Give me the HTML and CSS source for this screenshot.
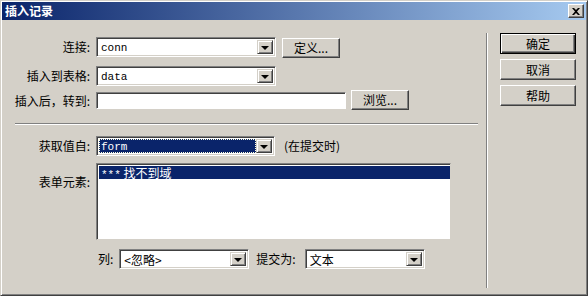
FILE: index.html
```html
<!DOCTYPE html>
<html>
<head>
  <title>插入记录</title>
  <link rel="stylesheet" href="styles.css">
</head>
<body>
  <div class="window">
    <div class="titlebar">
      <span class="title">插入记录</span>
      <span class="close">
        <svg width="8" height="7" viewBox="0 0 8 7"><path d="M0 0h2l2 2 2-2h2L5 3.5 8 7H6L4 5 2 7H0l3-3.5z" fill="#000"/></svg>
      </span>
    </div>
    <div class="body">
      <div class="main">
        <div class="row row-conn">
          <label class="lbl">连接:</label>
          <div class="select w180"><span class="value mono">conn</span><span class="arrow"></span></div>
          <button class="btn btn-small">定义...</button>
        </div>
        <div class="row row-table">
          <label class="lbl">插入到表格:</label>
          <div class="select w180"><span class="value mono">data</span><span class="arrow"></span></div>
        </div>
        <div class="row row-goto">
          <label class="lbl">插入后，转到:</label>
          <div class="textbox"></div>
          <button class="btn btn-small">浏览...</button>
        </div>

        <div class="hsep"></div>

        <div class="row row-from">
          <label class="lbl">获取值自:</label>
          <div class="select w179 focused"><span class="value mono">form</span><span class="arrow"></span></div>
          <span class="note">(在提交时)</span>
        </div>
        <div class="row row-elems">
          <label class="lbl lbl-top">表单元素:</label>
          <div class="listbox">
            <div class="item selected"><span class="mono">***</span> 找不到域</div>
          </div>
        </div>
        <div class="row row-col">
          <span class="small-lbl">列:</span>
          <div class="select w130"><span class="value">&lt;忽略&gt;</span><span class="arrow"></span></div>
          <span class="small-lbl submit-lbl">提交为:</span>
          <div class="select w120"><span class="value">文本</span><span class="arrow"></span></div>
        </div>
      </div>
      <div class="vsep"></div>
      <div class="side">
        <button class="btn btn-side default">确定</button>
        <button class="btn btn-side">取消</button>
        <button class="btn btn-side">帮助</button>
      </div>
    </div>
  </div>
</body>
</html>
```

FILE: styles.css
```css
body {
  margin: 0;
  font-family: "Noto Sans CJK SC", "DejaVu Sans", sans-serif;
  font-size: 12px;
  line-height: 14px;
  color: #000;
}

.window {
  width: 588px;
  height: 296px;
  box-sizing: border-box;
  background-color: #d4d0c8;
  border: 1px solid;
  border-color: #d4d0c8 #404040 #404040 #d4d0c8;
  box-shadow: inset 1px 1px #fff, inset -1px -1px #808080;
  padding: 1px;
  display: flex;
  flex-direction: column;
}

.titlebar {
  height: 18px;
  background: linear-gradient(to right, #0a246a, #a6caf0);
  display: flex;
  align-items: center;
  justify-content: space-between;
  padding: 0 2px 0 3px;
}

.title {
  color: #fff;
  font-weight: bold;
}

.close {
  width: 16px;
  height: 14px;
  box-sizing: border-box;
  background-color: #d4d0c8;
  border: 1px solid;
  border-color: #fff #404040 #404040 #fff;
  box-shadow: inset -1px -1px #808080;
  display: flex;
  align-items: center;
  justify-content: center;
}

.body {
  flex: 1;
  display: flex;
}

.main {
  width: 482px;
  padding-top: 16px;
}

.row {
  display: flex;
  align-items: center;
}

.lbl {
  width: 88px;
  text-align: right;
  margin-right: 6px;
  flex-shrink: 0;
}

.mono {
  font-family: "Liberation Mono", "Noto Sans CJK SC", monospace;
  font-size: 11px;
}

.select {
  height: 20px;
  box-sizing: border-box;
  background-color: #fff;
  border: 1px solid;
  border-color: #808080 #fff #fff #808080;
  box-shadow: inset 1px 1px #404040, inset -1px -1px #d4d0c8;
  padding: 2px;
  display: flex;
  align-items: stretch;
}

.w180 { width: 180px; }
.w179 { width: 179px; }
.w130 { width: 130px; }
.w120 { width: 120px; }

.value {
  flex: 1;
  padding-left: 2px;
  line-height: 16px;
  white-space: nowrap;
}

.select.focused .value {
  background-color: #0a246a;
  color: #fff;
  outline: 1px dotted #ffd;
  outline-offset: -1px;
}

.arrow {
  width: 16px;
  box-sizing: border-box;
  background-color: #d4d0c8;
  border: 1px solid;
  border-color: #d4d0c8 #404040 #404040 #d4d0c8;
  box-shadow: inset 1px 1px #fff, inset -1px -1px #808080;
  position: relative;
}

.arrow::after {
  content: "";
  position: absolute;
  left: 3px;
  top: 5px;
  border-left: 4px solid transparent;
  border-right: 4px solid transparent;
  border-top: 4px solid #000;
}

.btn {
  font-family: inherit;
  font-size: 12px;
  line-height: 14px;
  background-color: #d4d0c8;
  color: #000;
  border: 1px solid;
  border-color: #fff #404040 #404040 #fff;
  box-shadow: inset -1px -1px #808080;
  padding: 0;
  box-sizing: border-box;
}

.btn-small {
  width: 58px;
  height: 20px;
}

.row-conn .btn {
  margin-left: 6px;
  margin-top: 2px;
}

.row-table {
  margin-top: 8px;
}

.row-goto {
  margin-top: 4px;
  align-items: flex-end;
}

.row-goto .lbl {
  align-self: center;
  padding-top: 2px;
}

.textbox {
  width: 250px;
  height: 17px;
  box-sizing: border-box;
  background-color: #fff;
  border: 1px solid;
  border-color: #808080 #fff #fff #808080;
  box-shadow: inset 1px 1px #404040;
  margin-bottom: 1px;
}

.row-goto .btn {
  margin-left: 5px;
}

.hsep {
  margin: 13px 0 0 13px;
  width: 463px;
  border-top: 1px solid #808080;
  border-bottom: 1px solid #fff;
}

.row-from {
  margin-top: 11px;
}

.note {
  margin-left: 9px;
}

.row-elems {
  margin-top: 7px;
  align-items: flex-start;
}

.lbl-top {
  padding-top: 12px;
}

.listbox {
  width: 355px;
  height: 77px;
  box-sizing: border-box;
  background-color: #fff;
  border: 1px solid;
  border-color: #808080 #d4d0c8 #d4d0c8 #808080;
  box-shadow: inset 1px 1px #404040;
  padding: 2px 0 0 2px;
}

.item {
  height: 13px;
  line-height: 13px;
  padding-left: 2px;
  white-space: nowrap;
}

.item.selected {
  background-color: #0a246a;
  color: #fff;
}

.row-col {
  margin-top: 9px;
  padding-left: 96px;
}

.small-lbl {
  margin-right: 6px;
}

.submit-lbl {
  margin-left: 7px;
  margin-right: 9px;
}

.vsep {
  margin: 13px 0 6px 2px;
  border-left: 1px solid #808080;
  border-right: 1px solid #fff;
}

.side {
  padding: 13px 0 0 12px;
  display: flex;
  flex-direction: column;
  gap: 5px;
}

.btn-side {
  width: 76px;
  height: 21px;
  font-size: 12px;
}

.btn.default {
  border: 1px solid #000;
  box-shadow: inset 1px 1px #fff, inset -1px -1px #404040, inset -2px -2px #808080;
}
```
